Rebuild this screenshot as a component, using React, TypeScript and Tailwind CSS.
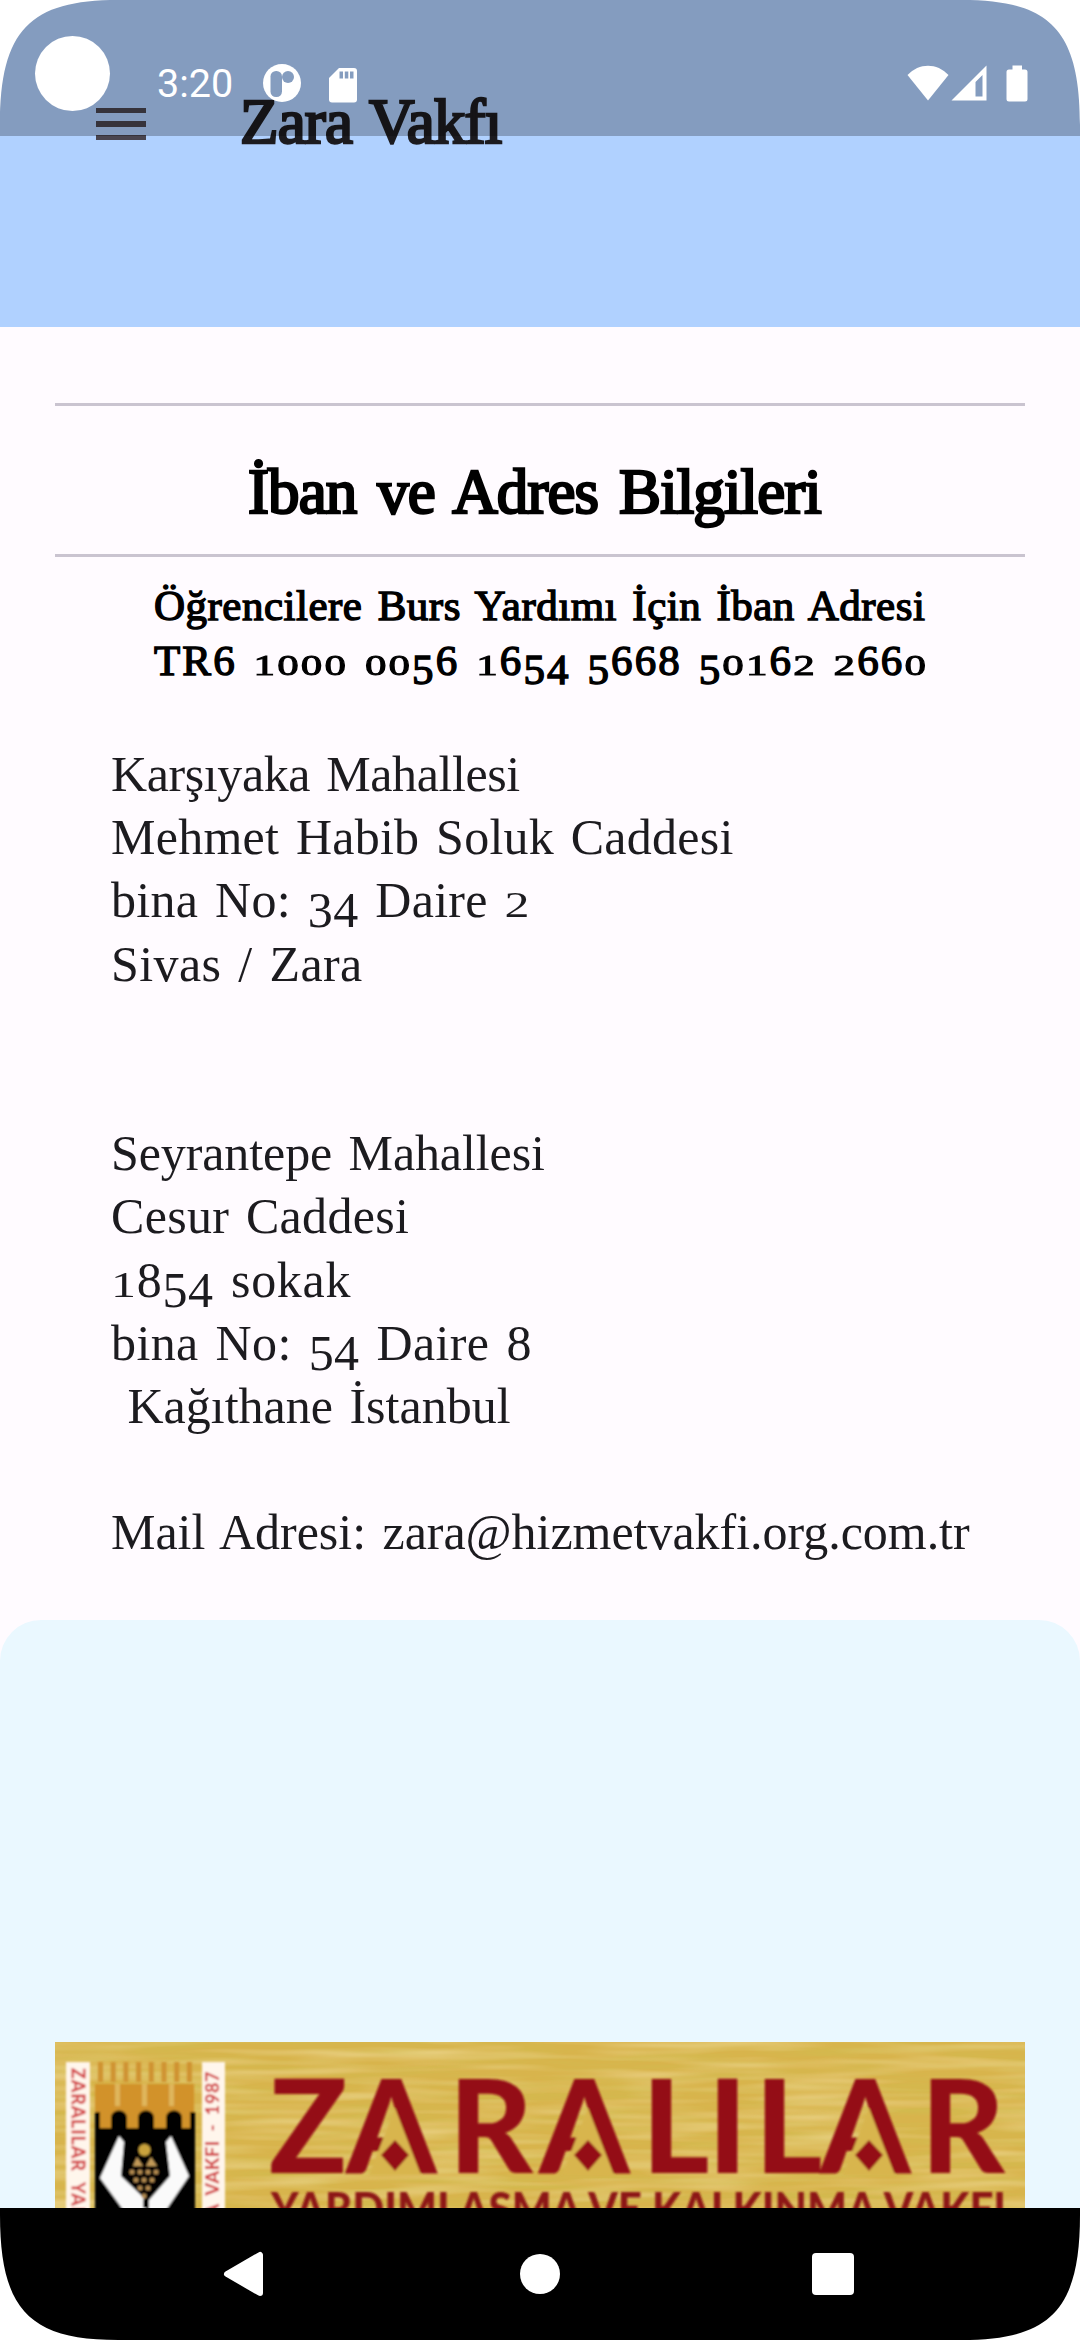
import React from 'react';

/* Renders a line with old-style numerals: 0-2 sit at x-height, 3/4/5/7/9 hang below the baseline. */
function OldStyle({ text }: { text: string }) {
  const runs = text.match(/[012]+|[34579]+|[^0-5 79]+|\s+/g) ?? [];
  return (
    <>
      {runs.map((run, i) => {
        if (/^[012]/.test(run)) {
          return (
            <span key={i} className="inline-block origin-[50%_84%] scale-y-[0.7] leading-none">
              {run}
            </span>
          );
        }
        if (/^[34579]/.test(run)) {
          return (
            <span key={i} className="inline-block translate-y-[0.2em] leading-none">
              {run}
            </span>
          );
        }
        return <React.Fragment key={i}>{run}</React.Fragment>;
      })}
    </>
  );
}

function StatusBar() {
  return (
    <div className="absolute inset-x-0 top-0 h-[136px] bg-black/25 text-white">
      <div className="flex h-full items-start pt-9 pl-[35px] pr-[52px]">
        <span className="size-[75px] rounded-full bg-white" />
        <span className="mt-[25px] ml-[47px] w-[76px] font-['Roboto'] text-[39.5px] leading-[46px]">3:20</span>
        <svg className="mt-[28px] ml-[30px] h-[38px] w-[38px]" viewBox="0 0 38 38">
          <circle cx="19" cy="19" r="19" fill="#fff" />
          <rect x="7.500" y="7" width="11.500" height="26" rx="5.500" fill="#859dbf" />
          <circle cx="25" cy="13" r="6" fill="#859dbf" />
        </svg>
        <svg className="mt-[31px] ml-[27px] h-[36px] w-[30px]" viewBox="0 0 30 36">
          <path d="M11 1h15a3 3 0 0 1 3 3v28.500a3 3 0 0 1-3 3H4a3 3 0 0 1-3-3V11z" fill="#fff" />
          <path d="M11.500 4.500h3.500v7h-3.500zM16.800 4.500h3.500v7h-3.500zM22 4.500h3.500v7H22z" fill="#859dbf" />
        </svg>
        <span className="grow" />
        <svg className="mt-[29px] h-[36px] w-[42px]" viewBox="0 0 42 36">
          <path d="M0.500 10C12-2.500 30-2.500 41.500 10L21 35.500z" fill="#fff" />
        </svg>
        <svg className="mt-[29px] ml-[2px] h-[36px] w-[36px]" viewBox="0 0 36 36">
          <path fillRule="evenodd" d="M0.500 35.500L35.500 0.500V35.500zM24.500 17v14.500h7V10z" fill="#fff" />
        </svg>
        <svg className="mt-[29px] ml-[19px] h-[37px] w-[22px]" viewBox="0 0 22 37">
          <path
            d="M6.500 0.500h9.500v4h3a2.500 2.500 0 0 1 2.500 2.500v27a2.500 2.500 0 0 1-2.500 2.500H3a2.500 2.500 0 0 1-2.500-2.500V7a2.500 2.500 0 0 1 2.500-2.500h3.500z"
            fill="#fff"
          />
        </svg>
      </div>
    </div>
  );
}

function Banner() {
  const teeth = [0, 1, 2, 3, 4, 5, 6, 7];
  const diamonds = [395, 588, 869];
  const grapes: [number, number][] = [
    [132, 2172], [140, 2172], [148, 2172], [156, 2172],
    [136, 2180], [144, 2180], [152, 2180],
    [140, 2188], [148, 2188],
    [144, 2196],
  ];
  return (
    <svg className="block h-[166px] w-[970px]" viewBox="55 2042 970 166">
      <defs>
        <filter id="grain" x="0" y="0" width="100%" height="100%">
          <feTurbulence type="fractalNoise" baseFrequency="0.009 0.13" numOctaves="3" seed="4" />
          <feColorMatrix values="0 0 0 0 0.62  0 0 0 0 0.52  0 0 0 0 0.08  1.1 0 0 0 -0.42" />
        </filter>
        <filter id="grainLight" x="0" y="0" width="100%" height="100%">
          <feTurbulence type="fractalNoise" baseFrequency="0.008 0.1" numOctaves="2" seed="11" />
          <feColorMatrix values="0 0 0 0 0.9  0 0 0 0 0.74  0 0 0 0 0.36  1.1 0 0 0 -0.42" />
        </filter>
        <filter id="soft" x="-5%" y="-5%" width="110%" height="110%">
          <feGaussianBlur stdDeviation="1" />
        </filter>
      </defs>
      <rect x="55" y="2042" width="970" height="166" fill="#d8b44c" />
      <rect x="55" y="2042" width="970" height="166" filter="url(#grain)" />
      <rect x="55" y="2042" width="970" height="166" filter="url(#grainLight)" />
      <g filter="url(#soft)">
        <rect x="66" y="2062" width="24" height="160" fill="#fff6ec" />
        <rect x="202" y="2062" width="23" height="160" fill="#fff6ec" />
        <text
          transform="translate(71.500 2068) rotate(90)"
          fill="#d23c40"
          fontFamily="Lato"
          fontWeight="900"
          fontSize="18"
          letterSpacing="0.800"
          wordSpacing="6"
        >
          ZARALILAR YARDIMLAŞMA
        </text>
        <text
          transform="translate(219 2071) rotate(-90)"
          textAnchor="end"
          fill="#d23c40"
          fontFamily="Lato"
          fontWeight="900"
          fontSize="18"
          letterSpacing="0.600"
          wordSpacing="4"
        >
          KALKINMA VAKFI - 1987
        </text>
        {teeth.map((t) => (
          <rect key={t} x={98 + t * 12.7} y="2062" width="5" height="20" fill="#cf9332" />
        ))}
        <rect x="95" y="2084" width="99" height="50" fill="#d2922c" />
        <path d="M115 2084h5v22h-5zM142 2084h5v22h-5zM169 2084h5v22h-5z" fill="#dfb65c" />
        <path
          d="M95 2222V2112h5v16h11v-10c0-10 16-10 16 0v10h11v-10c0-10 16-10 16 0v10h12v-10c0-10 16-10 16 0v10h8v-16h5V2222z"
          fill="#060606"
        />
        <path d="M119 2136L124 2142L121 2176L146 2200V2222H132L100 2178z" fill="#fafafa" />
        <path d="M171 2136L166 2142L170 2176L149 2200V2222H158L189 2176z" fill="#fafafa" />
        <path d="M143 2208V2200l2-3 3 3v8z" fill="#060606" />
        <circle cx="144.500" cy="2150" r="6" fill="#c9a33c" />
        <path d="M137 2157l6 9h-10zM151 2157l6 9h-11z" fill="#c29a58" />
        {grapes.map(([x, y]) => (
          <circle key={`${x}-${y}`} cx={x} cy={y} r="2.500" fill="#b48a50" />
        ))}
        <text
          x="269 346 449 539 642 708 755 820 921"
          y="2173"
          fill="#940f18"
          fontFamily="Lato"
          fontWeight="900"
          fontSize="129"
        >
          ZARALILAR
        </text>
        {diamonds.map((x) => (
          <g key={x}>
            <path d={`M${x} 2108L${x + 26} 2175H${x - 26}z`} fill="#d8b54e" />
            <path d={`M${x} 2140l14 15-14 16-14-16z`} fill="#940f18" />
          </g>
        ))}
        <text
          x="271"
          y="2225"
          textLength="735"
          lengthAdjust="spacingAndGlyphs"
          fill="#8d1717"
          fontFamily="Lato"
          fontWeight="900"
          fontSize="46"
        >
          YARDIMLAŞMA VE KALKINMA VAKFI
        </text>
      </g>
    </svg>
  );
}

function Corners() {
  const d = 'M0 0H118C30 0 0 30 0 125z';
  return (
    <>
      <svg className="absolute top-0 left-0 h-[125px] w-[118px]" viewBox="0 0 118 125"><path d={d} fill="#fff" /></svg>
      <svg className="absolute top-0 right-0 h-[125px] w-[118px] -scale-x-100" viewBox="0 0 118 125"><path d={d} fill="#fff" /></svg>
      <svg className="absolute bottom-0 left-0 h-[125px] w-[118px] -scale-y-100" viewBox="0 0 118 125"><path d={d} fill="#fff" /></svg>
      <svg className="absolute right-0 bottom-0 h-[125px] w-[118px] -scale-100" viewBox="0 0 118 125"><path d={d} fill="#fff" /></svg>
    </>
  );
}

export default function App() {
  return (
    <div className="relative flex h-[2340px] w-[1080px] flex-col overflow-hidden bg-[#fffbff] font-['Liberation_Serif',serif]">
      <header className="flex h-[327px] shrink-0 items-start bg-[#b0d1ff] pl-24">
        <div className="mt-[107.5px] flex w-[50px] flex-col gap-[8.2px]">
          <span className="h-[5.5px] bg-[#49454f]" />
          <span className="h-[5.5px] bg-[#49454f]" />
          <span className="h-[5.5px] bg-[#49454f]" />
        </div>
        <h1 className="mt-[82px] ml-[94px] text-[63px] leading-[80px] tracking-[-0.8px] whitespace-nowrap text-[#1c1b1f] [word-spacing:3px] [-webkit-text-stroke:2.5px_#1c1b1f]">
          Zara Vakfı
        </h1>
      </header>

      <main className="flex min-h-0 grow flex-col overflow-hidden">
        <section className="mx-[55px] mt-[76px] flex shrink-0 flex-col">
          <hr className="h-[3px] border-0 bg-[#cac4d0]" />
          <h2 className="mt-[46px] h-[80px] pl-[193px] text-[63px] leading-[80px] tracking-[-0.9px] whitespace-nowrap text-black [word-spacing:6px] [-webkit-text-stroke:2.5px_#000]">
            İban ve Adres Bilgileri
          </h2>
          <hr className="mt-[22px] h-[3px] border-0 bg-[#cac4d0]" />
        </section>

        <section className="mt-[20.5px] shrink-0 pl-[154px] text-[43px] leading-[55px] whitespace-nowrap text-black [word-spacing:4px] [-webkit-text-stroke:1.4px_#000]">
          <p className="h-[55px] tracking-[0.5px]">Öğrencilere Burs Yardımı İçin İban Adresi</p>
          <p className="h-[55px] tracking-[2.1px]">
            <OldStyle text="TR6 1000 0056 1654 5668 50162 2660" />
          </p>
        </section>

        <section className="mt-[55.5px] shrink-0 pl-[111px] text-[50px] leading-[63.2px] whitespace-pre text-[#1c1b1f] [word-spacing:4px]">
          <p className="h-[63.2px] tracking-[-0.4px]">Karşıyaka Mahallesi</p>
          <p className="h-[63.2px] tracking-[0.25px]">Mehmet Habib Soluk Caddesi</p>
          <p className="h-[63.2px] tracking-[0.3px]"><OldStyle text="bina No: 34 Daire 2" /></p>
          <p className="h-[63.2px] tracking-[0.4px]">Sivas / Zara</p>
          <p className="mt-[126.4px] h-[63.2px] tracking-[-0.1px]">Seyrantepe Mahallesi</p>
          <p className="h-[63.2px] tracking-[0.3px]">Cesur Caddesi</p>
          <p className="h-[63.2px] tracking-[0.7px]"><OldStyle text="1854 sokak" /></p>
          <p className="h-[63.2px] tracking-[0.4px]"><OldStyle text="bina No: 54 Daire 8" /></p>
          <p className="h-[63.2px]"> Kağıthane İstanbul</p>
          <p className="mt-[63.2px] h-[63.2px] tracking-[-0.03px]">Mail Adresi: zara@hizmetvakfi.org.com.tr</p>
        </section>

        <section className="mt-[55.5px] grow rounded-t-[41px] bg-[#eaf8ff] px-[55px] pt-[422px]">
          <Banner />
        </section>
      </main>

      <nav className="flex h-[132px] shrink-0 items-center bg-black pl-[223px]">
        <svg className="h-[46px] w-[40px]" viewBox="0 0 40 46">
          <path d="M4 23L37 4V42z" fill="#fff" stroke="#fff" strokeWidth="6" strokeLinejoin="round" />
        </svg>
        <span className="ml-[257px] size-[40px] rounded-full bg-white" />
        <span className="ml-[252px] size-[42px] rounded-[4px] bg-white" />
      </nav>

      <StatusBar />
      <Corners />
    </div>
  );
}
